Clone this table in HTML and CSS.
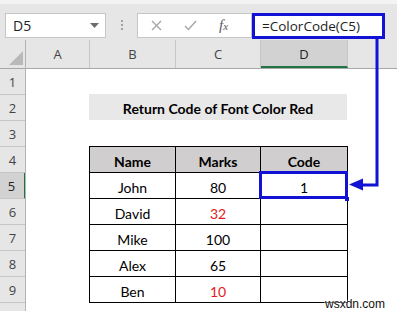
FILE: index.html
```html
<!DOCTYPE html>
<html>
<head>
<meta charset="utf-8">
<link rel="stylesheet" href="styles.css">
</head>
<body>
<div class="app">
  <div class="toolbar">
    <div class="namebox"><span>D5</span><svg class="caret" width="9" height="5" viewBox="0 0 9 5"><path d="M0 0H9L4.5 5Z" fill="#6d6d6d"/></svg></div>
    <div class="dots"><i></i><i></i><i></i></div>
    <div class="fxbox">
      <svg class="ic-x" width="11" height="11" viewBox="0 0 11 11"><path d="M1 1L10 10M10 1L1 10" stroke="#a6a6a6" stroke-width="1.4" fill="none"/></svg>
      <svg class="ic-check" width="13" height="11" viewBox="0 0 13 11"><path d="M1 6L4.5 9.5L12 1" stroke="#a6a6a6" stroke-width="1.4" fill="none"/></svg>
      <span class="fx">f<span class="fxs">x</span></span>
    </div>
    <div class="formula">=ColorCode(C5)</div>
  </div>
  <div class="sheet">
    <div class="corner"><svg width="14" height="14" viewBox="0 0 14 14"><path d="M14 0V14H0Z" fill="#b9b9b9"/></svg></div>
    <div class="colheads">
      <div class="ch a">A</div>
      <div class="ch b">B</div>
      <div class="ch c">C</div>
      <div class="ch d sel">D</div>
      <div class="ch e"></div>
    </div>
    <div class="rowheads">
      <div class="rh">1</div>
      <div class="rh">2</div>
      <div class="rh">3</div>
      <div class="rh">4</div>
      <div class="rh sel">5</div>
      <div class="rh">6</div>
      <div class="rh">7</div>
      <div class="rh">8</div>
      <div class="rh">9</div>
      <div class="rh">10</div>
    </div>
    <div class="cells">
      <div class="title">Return Code of Font Color Red</div>
      <div class="tbl">
        <div class="td th">Name</div><div class="td th">Marks</div><div class="td th">Code</div>
        <div class="td">John</div><div class="td">80</div><div class="td active">1</div>
        <div class="td">David</div><div class="td red">32</div><div class="td"></div>
        <div class="td">Mike</div><div class="td">100</div><div class="td"></div>
        <div class="td">Alex</div><div class="td">65</div><div class="td"></div>
        <div class="td">Ben</div><div class="td red">10</div><div class="td"></div>
      </div>
    </div>
  </div>
  <svg class="annot" width="397" height="311" viewBox="0 0 397 311">
    <path d="M377 38V185H362" stroke="#1212d4" stroke-width="3" fill="none"/>
    <path d="M349 184.5L363 178.5V190.5Z" fill="#1212d4"/>
  </svg>
  <div class="wm">wsxdn.com</div>
</div>
</body>
</html>
```

FILE: styles.css
```css
* { box-sizing: border-box; margin: 0; padding: 0; }
body { width: 397px; height: 311px; overflow: hidden; background: #fff; font-family: "Open Sans", "Noto Sans", sans-serif; }
.app { position: relative; width: 397px; height: 311px; overflow: hidden; }

.toolbar {
  height: 40px;
  background: linear-gradient(#f3f3f3 0, #f3f3f3 4px, #e6e6e6 4px);
  display: flex;
  align-items: flex-start;
  padding: 13px 0 0 5px;
}
.namebox {
  width: 101px; height: 25px;
  background: #fff; border: 1px solid #c6c6c6;
  display: flex; align-items: center; justify-content: space-between;
  padding: 0 6px 0 7px;
  font-size: 14px; color: #1e1e1e;
}
.dots { width: 31px; height: 25px; display: flex; flex-direction: column; align-items: center; gap: 2px; padding-top: 7px; }
.dots i { display: block; width: 2px; height: 2px; background: #a0a0a0; }
.fxbox {
  width: 115px; height: 25px;
  background: #fff; border: 1px solid #c6c6c6;
  display: flex; align-items: center;
  padding-left: 13px;
}
.ic-check { margin-left: 22px; }
.fx { margin-left: 22px; font-family: "Liberation Serif", serif; font-style: italic; font-size: 15px; color: #5a5a5a; }
.fxs { font-size: 11px; }
.formula {
  width: 133px; height: 26px;
  border: 3px solid #1212d4; background: #fff;
  display: flex; align-items: center;
  padding-left: 7px;
  font-size: 13.5px; color: #1e1e1e;
}

.sheet {
  display: grid;
  grid-template-columns: 26px 1fr;
  grid-template-rows: 29px 1fr;
  height: 271px;
}
.corner { background: #e6e6e6; border-right: 1px solid #b4b4b4; border-bottom: 1px solid #a8a8a8; display: flex; align-items: flex-end; justify-content: flex-end; padding: 0 2px 3px 0; }
.colheads { display: flex; background: #e6e6e6; border-bottom: 1px solid #a8a8a8; }
.ch { height: 28px; border-right: 1px solid #c6c6c6; display: flex; align-items: center; justify-content: center; font-size: 13px; color: #444; }
.ch.a { width: 64px; }
.ch.b { width: 86px; }
.ch.c { width: 85px; }
.ch.d { width: 87px; }
.ch.e { flex: 1; border-right: none; }
.ch.sel { background: #d2d2d2; border-bottom: 2px solid #217346; color: #222; padding-top: 2px; }

.rowheads { display: flex; flex-direction: column; background: #e6e6e6; border-right: 1px solid #b4b4b4; overflow: hidden; }
.rh { height: 26px; flex: none; border-bottom: 1px solid #c6c6c6; display: flex; align-items: center; justify-content: center; font-size: 13px; color: #444; padding-top: 1px; }
.rh.sel { background: #d2d2d2; margin-right: -1px; border-right: 2px solid #217346; padding-right: 1px; color: #222; }

.cells { padding-top: 25px; font-family: "Lato", sans-serif; }
.title {
  margin-left: 63px; width: 258px; height: 26px;
  background: #e9e8e8;
  display: flex; align-items: center; justify-content: center;
  font-weight: 700; font-size: 14px; color: #000;
  padding-top: 2px;
}
.tbl {
  margin-left: 63px; margin-top: 26px;
  width: 259px;
  display: grid;
  grid-template-columns: 86px 85px 87px;
  border-left: 1px solid #000; border-top: 1px solid #000;
}
.td {
  position: relative;
  height: 26px;
  border-right: 1px solid #000; border-bottom: 1px solid #000;
  display: flex; align-items: center; justify-content: center;
  font-size: 14px; color: #000;
  padding-top: 3px;
}
.td.th { background: #d0cece; font-weight: 700; }
.td.red { color: #e5191b; }
.td.active::after {
  content: "";
  position: absolute;
  top: -2px; left: -2px; right: -1px; bottom: -1px;
  border: 3px solid #1212d4;
}
.td.active::before {
  content: "";
  position: absolute;
  right: -2px; bottom: -3px;
  width: 4px; height: 4px;
  background: #1212d4;
  z-index: 1;
}

.annot { position: absolute; left: 0; top: 0; pointer-events: none; }
.wm {
  position: absolute; right: 12px; bottom: 0;
  line-height: 13px;
  font-family: "Liberation Sans", sans-serif; font-size: 12px; color: #111;
  text-shadow: 0 0 2px #fff, 0 0 2px #fff;
}
```
